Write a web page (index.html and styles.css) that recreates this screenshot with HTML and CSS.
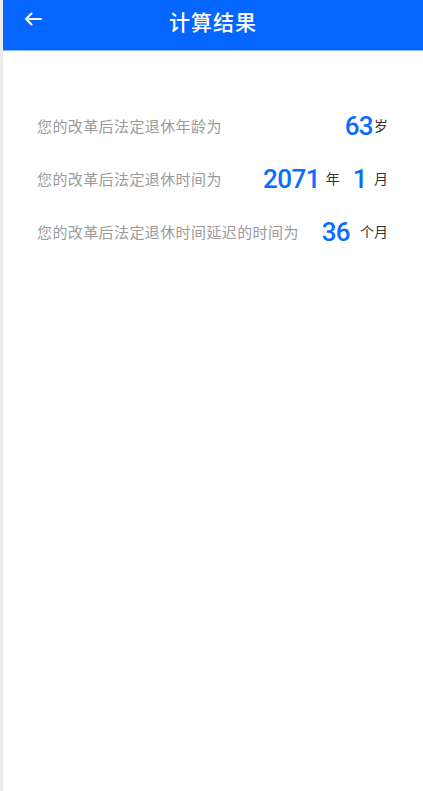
FILE: index.html
```html
<!DOCTYPE html>
<html lang="zh-CN">
<head>
<meta charset="utf-8">
<title>计算结果</title>
<link rel="stylesheet" href="styles.css">
</head>
<body>
<div class="frame">
  <div class="strip"></div>
  <div class="page">
    <header class="topbar">
      <span class="back" aria-label="返回">
        <svg width="18" height="14" viewBox="0 0 18 14"><path d="M17 7H2M7.5 1.5L2 7l5.5 5.5" fill="none" stroke="#fff" stroke-width="2" stroke-linecap="round" stroke-linejoin="round"/></svg>
      </span>
      <h1 class="title">计算结果</h1>
    </header>
    <main class="results">
      <div class="row">
        <span class="label">您的改革后法定退休年龄为</span>
        <span class="value"><span class="num">63</span><span class="unit u-tight">岁</span></span>
      </div>
      <div class="row">
        <span class="label">您的改革后法定退休时间为</span>
        <span class="value"><span class="num">2071</span><span class="unit u-year">年</span><span class="num">1</span><span class="unit u-month">月</span></span>
      </div>
      <div class="row">
        <span class="label">您的改革后法定退休时间延迟的时间为</span>
        <span class="value"><span class="num">36</span><span class="unit u-wide">个月</span></span>
      </div>
    </main>
  </div>
</div>
</body>
</html>
```
FILE: styles.css
```css
html, body {
  margin: 0;
  padding: 0;
  background: #ffffff;
}
body {
  font-family: "Noto Sans CJK SC", "Noto Sans", sans-serif;
}
.frame {
  display: flex;
  min-height: 791px;
}
.strip {
  width: 3px;
  background: #ececec;
  flex: none;
}
.page {
  flex: 1;
  display: flex;
  flex-direction: column;
}
.topbar {
  position: relative;
  height: 50px;
  background: #0566ff;
  border-bottom: 1px solid #8db6ff;
  display: flex;
  align-items: center;
  justify-content: center;
}
.back {
  position: absolute;
  left: 21px;
  top: 12px;
  width: 18px;
  height: 14px;
  display: flex;
}
.title {
  margin: 0 0 9px;
  color: #ffffff;
  font-size: 21px;
  font-weight: 500;
  letter-spacing: 1px;
}
.results {
  padding: 48px 35px 0 34px;
  display: flex;
  flex-direction: column;
}
.row {
  height: 53px;
  display: flex;
  align-items: center;
  justify-content: space-between;
}
.label {
  color: #9b9b9b;
  font-size: 15px;
  letter-spacing: 0.4px;
}
.value {
  display: flex;
  align-items: center;
  color: #333333;
}
.num {
  font-family: Roboto, "Noto Sans", sans-serif;
  font-size: 26px;
  color: #0b6cff;
  font-weight: 500;
  letter-spacing: -0.6px;
  line-height: 1;
}
.unit {
  font-size: 14px;
  line-height: 1;
  color: #333333;
  margin-top: -2px;
}
.u-tight { margin-left: 1px; }
.u-year { margin-left: 6px; margin-right: 13px; }
.u-month { margin-left: 7px; }
.u-wide { margin-left: 10px; }
```
